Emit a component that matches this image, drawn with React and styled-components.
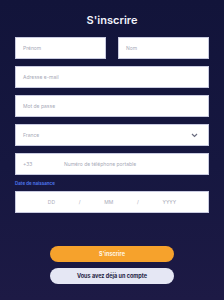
import React from 'react'
import styled, { createGlobalStyle } from 'styled-components'

const Global = createGlobalStyle`
  html, body { margin: 0; padding: 0; }
  body {
    width: 224px;
    height: 300px;
    overflow: hidden;
    font-family: Inter, "Open Sans", sans-serif;
  }
`

const Page = styled.div`
  width: 224px;
  height: 300px;
  box-sizing: border-box;
  padding: 13px 15px 0 15px;
  background: linear-gradient(180deg, #12143a 0%, #161740 55%, #1d1a45 100%);
  display: flex;
  flex-direction: column;
`

const Title = styled.h1`
  margin: 0;
  height: 15px;
  font-size: 11px;
  line-height: 15px;
  font-weight: 600;
  color: #f2f3fb;
  text-align: center;
`

const Form = styled.div`
  margin-top: 9px;
  display: flex;
  flex-direction: column;
  gap: 7px;
`

const Row = styled.div`
  display: flex;
  gap: 12px;
`

const Field = styled.div`
  flex: ${p => (p.$half ? '1 1 0' : 'none')};
  height: 22px;
  box-sizing: border-box;
  background: #fff;
  border: 1px solid #c9cbe0;
  display: flex;
  align-items: center;
  padding: 0 7px;
  font-size: 5px;
  color: #a8aab8;
`

const Chevron = styled.svg`
  margin-left: auto;
  margin-right: 3px;
`

const Prefix = styled.span`
  width: 41px;
`

const Label = styled.div`
  margin-top: -1px;
  margin-bottom: -2px;
  height: 5px;
  line-height: 5px;
  font-size: 4.5px;
  font-weight: 600;
  color: #4f78f2;
`

const DateField = styled(Field)`
  justify-content: space-around;
  padding: 0 20px;
`

const Buttons = styled.div`
  margin-top: 33px;
  display: flex;
  flex-direction: column;
  align-items: center;
  gap: 6px;
`

const Button = styled.button`
  width: 124px;
  height: 16px;
  border: none;
  border-radius: 8px;
  padding: 0;
  font-family: Inter, "Open Sans", sans-serif;
  font-size: 5.5px;
  font-weight: 700;
  cursor: pointer;
  background: ${p => (p.$primary ? '#f6a22c' : '#e5e7f4')};
  color: ${p => (p.$primary ? '#fff6e6' : '#1d1d44')};
`

export default function App() {
  return (
    <Page>
      <Global />
      <Title>S'inscrire</Title>
      <Form>
        <Row>
          <Field $half>Prénom</Field>
          <Field $half>Nom</Field>
        </Row>
        <Field>Adresse e-mail</Field>
        <Field>Mot de passe</Field>
        <Field>
          France
          <Chevron width="7" height="5" viewBox="0 0 7 5">
            <path d="M1 1l2.5 2.5L6 1" fill="none" stroke="#6b6d80" strokeWidth="1.2" />
          </Chevron>
        </Field>
        <Field>
          <Prefix>+33</Prefix>
          Numéro de téléphone portable
        </Field>
        <Label>Date de naissance</Label>
        <DateField>
          <span>DD</span>
          <span>/</span>
          <span>MM</span>
          <span>/</span>
          <span>YYYY</span>
        </DateField>
      </Form>
      <Buttons>
        <Button $primary>S'inscrire</Button>
        <Button>Vous avez déjà un compte</Button>
      </Buttons>
    </Page>
  )
}
